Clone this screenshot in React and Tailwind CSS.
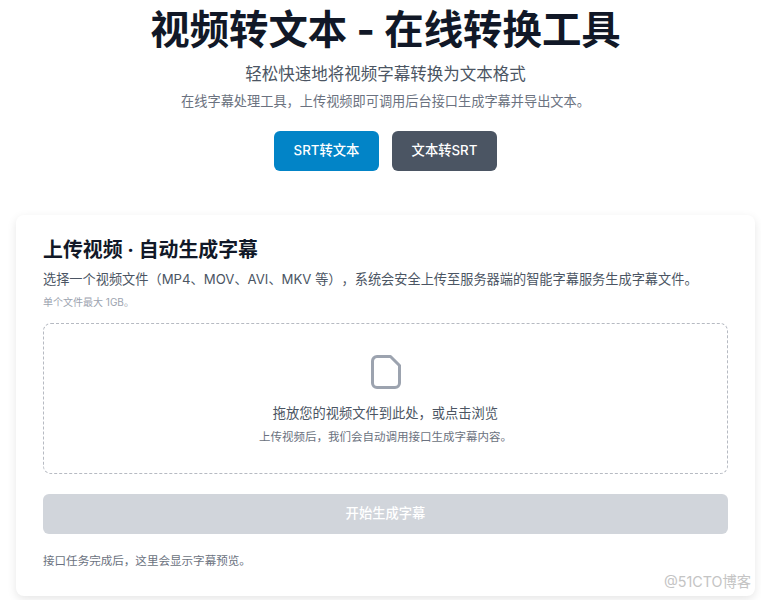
export default function App() {
  return (
    <div className="relative h-[600px] overflow-hidden bg-white font-['Inter','Noto_Sans_CJK_SC',sans-serif] [text-spacing-trim:space-all]">
      <div className="flex flex-col items-center pt-[5px] pl-[10px]">
        <h1 className="text-[39.4px] leading-[50px] font-bold text-[#111827]">视频转文本 - 在线转换工具</h1>
        <p className="mt-[6px] text-[16.5px] leading-[26px] text-[#4b5563]">轻松快速地将视频字幕转换为文本格式</p>
        <p className="mt-[4px] text-[13.2px] leading-[20px] text-[#6b7280]">在线字幕处理工具，上传视频即可调用后台接口生成字幕并导出文本。</p>
        <div className="mt-[20px] flex gap-[13px]">
          <button className="h-[40px] w-[105px] rounded-md bg-[#0284c7] text-[13.3px] font-medium text-white">SRT转文本</button>
          <button className="h-[40px] w-[105px] rounded-md bg-[#4b5563] text-[13.3px] font-medium text-white">文本转SRT</button>
        </div>
      </div>

      <div className="mt-[44px] ml-[16px] h-[381px] w-[739px] rounded-lg bg-white px-[27px] pt-[22px] shadow-[0_3px_10px_rgba(0,0,0,0.1)]">
        <h2 className="text-[19.9px] leading-[26px] font-bold text-[#111827]">上传视频 · 自动生成字幕</h2>
        <p className="mt-[6px] text-[13.2px] leading-[20px] text-[#4b5563]">选择一个视频文件（MP4、MOV、AVI、MKV 等），系统会安全上传至服务器端的智能字幕服务生成字幕文件。</p>
        <p className="mt-[5px] text-[10px] leading-[16px] text-[#9ca3af]">单个文件最大 1GB。</p>

        <div className="mt-[13px] flex h-[151px] flex-col items-center rounded-lg border border-dashed border-[#b6bac2] pt-[31px]">
          <svg width="30" height="34" viewBox="0 0 30 34" fill="none" stroke="#9ca3af" strokeWidth="3" strokeLinejoin="round">
            <path d="M6 1.5 H19.5 L28.5 10.5 V28 a4.5 4.5 0 0 1 -4.5 4.5 H6 a4.5 4.5 0 0 1 -4.5 -4.5 V6 a4.5 4.5 0 0 1 4.5 -4.5 Z" />
          </svg>
          <p className="mt-[14px] text-[13.25px] leading-[20px] text-[#4b5563]">拖放您的视频文件到此处，或点击浏览</p>
          <p className="mt-[5px] text-[11.5px] leading-[18px] text-[#6b7280]">上传视频后，我们会自动调用接口生成字幕内容。</p>
        </div>

        <button className="mt-[20px] h-[40px] w-full rounded-md bg-[#d1d5db] text-[13.3px] font-medium text-white">开始生成字幕</button>
        <p className="mt-[18px] text-[11.55px] leading-[18px] text-[#6b7280]">接口任务完成后，这里会显示字幕预览。</p>
      </div>

      <span className="absolute right-[10px] bottom-[8px] text-[14.3px] leading-[20px] text-[#c4c4c4]">@51CTO博客</span>
    </div>
  );
}
